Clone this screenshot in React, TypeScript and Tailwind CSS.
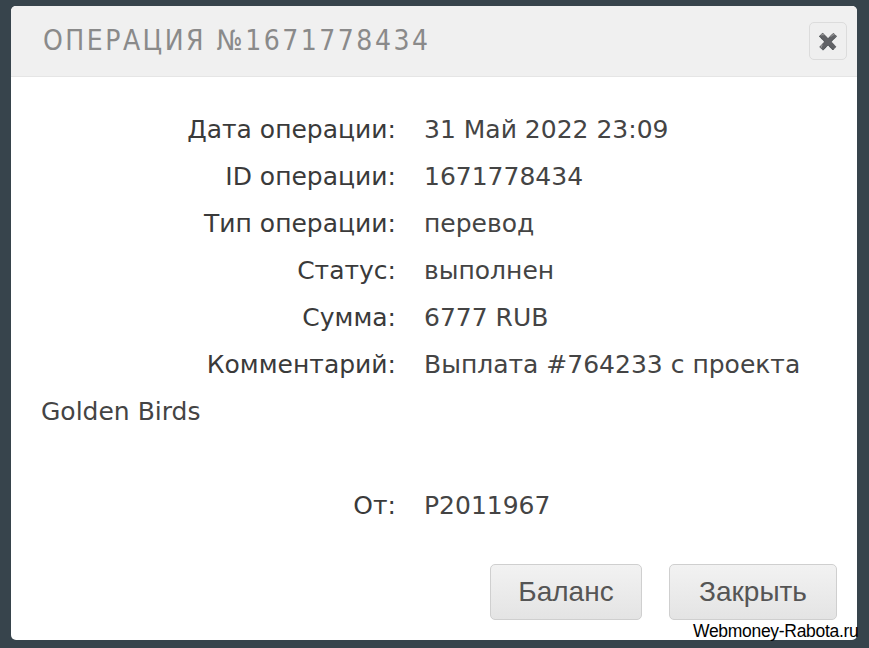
export default function App() {
  const rows: [string, string][] = [
    ['Дата операции:', '31 Май 2022 23:09'],
    ['ID операции:', '1671778434'],
    ['Тип операции:', 'перевод'],
    ['Статус:', 'выполнен'],
    ['Сумма:', '6777 RUB'],
    ['Комментарий:', 'Выплата #764233 с проекта Golden Birds'],
  ]
  return (
    <div className="w-[869px] h-[648px] bg-[#37444c] pt-[6px] pl-[11px] relative overflow-hidden">
      <div className="w-[846px] h-[634px] bg-white rounded-[5px] overflow-hidden flex flex-col">
        {/* Header */}
        <div className="h-[71px] bg-[#f0f0f0] border-b border-[#e5e5e5] flex items-center justify-between pl-[32px] pr-[10px]">
          <h1 className="text-[28px] tracking-[2.5px] text-[#8a8a8a] font-['DejaVu_Sans_Condensed',sans-serif] font-light">
            ОПЕРАЦИЯ №1671778434
          </h1>
          <button className="w-[38px] h-[38px] rounded-[5px] border border-[#dcdcdc] bg-[#efefef] text-[#999] text-[16px] font-bold leading-none flex items-center justify-center">
            ✖
          </button>
        </div>

        {/* Body */}
        <div className="px-[30px] pt-[29px] text-[25px] leading-[47px] text-[#444] font-['DejaVu_Sans',sans-serif]">
          {rows.map(([label, value]) => (
            <div key={label}>
              <span className="inline-block w-[355px] text-right mr-[28px] text-[#3a3a3a]">{label}</span>
              <span>{value}</span>
            </div>
          ))}
          <div className="h-[47px]" />
          <div>
            <span className="inline-block w-[355px] text-right mr-[28px] text-[#3a3a3a]">От:</span>
            <span>P2011967</span>
          </div>
        </div>

        {/* Footer */}
        <div className="flex justify-end gap-[27px] pr-[20px] mt-[35px]">
          <button className="w-[152px] h-[56px] rounded-[5px] border border-[#cfcfcf] bg-gradient-to-b from-[#f2f2f2] to-[#e4e4e4] text-[28px] text-[#555] font-['Liberation_Sans',sans-serif]">
            Баланс
          </button>
          <button className="w-[168px] h-[56px] rounded-[5px] border border-[#cfcfcf] bg-gradient-to-b from-[#f2f2f2] to-[#e4e4e4] text-[28px] text-[#555] font-['Liberation_Sans',sans-serif]">
            Закрыть
          </button>
        </div>
      </div>
      <div className="absolute left-[693px] top-[618px] text-[17.5px] text-black font-['Liberation_Sans_Narrow','Liberation_Sans',sans-serif] tracking-[-0.3px]">
        Webmoney-Rabota.ru
      </div>
    </div>
  )
}
